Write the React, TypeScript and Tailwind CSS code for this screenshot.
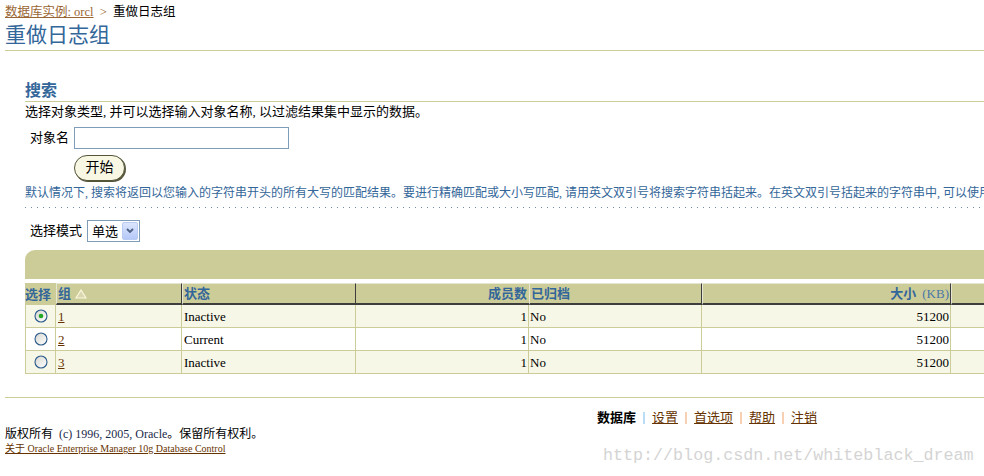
import React from "react";

const Radio = ({ checked }: { checked?: boolean }) => (
  <svg width="14" height="14" viewBox="0 0 14 14">
    <defs>
      <linearGradient id="rg" x1="0" y1="0" x2="1" y2="1">
        <stop offset="0" stopColor="#d6d6d0" />
        <stop offset="1" stopColor="#ffffff" />
      </linearGradient>
    </defs>
    <circle cx="7" cy="7" r="6" fill="url(#rg)" stroke="#2a5a8a" strokeWidth="1.1" />
    {checked && <circle cx="7" cy="7" r="2.3" fill="#22a822" />}
  </svg>
);

const SortUp = () => (
  <svg width="12" height="10" viewBox="0 0 12 10" className="ml-[4px]">
    <polygon points="6,1 11,9 1,9" fill="#d8d8b0" stroke="#fbf7dc" strokeWidth="1.2" />
  </svg>
);

const rows = [
  { g: "1", s: "Inactive", checked: true },
  { g: "2", s: "Current", checked: false },
  { g: "3", s: "Inactive", checked: false },
];

const bevel =
  "border-t border-t-[#e6e6d4] border-l border-l-[#e6e6d4] border-r border-r-[#3d3d3d] border-b-2 border-b-[#3d3d3d]";

export default function App() {
  return (
    <div className="relative w-[984px] h-[476px] overflow-hidden bg-white text-black font-['Liberation_Serif','Noto_Sans_CJK_SC',serif]">
      {/* breadcrumb */}
      <div className="h-[21px] pt-[4px] pl-[5px] text-[12.5px] leading-[16px] whitespace-nowrap">
        <span className="text-[#996633] underline">数据库实例: orcl</span>
        <span className="text-[#996633]">&nbsp; &gt; &nbsp;</span>
        <span>重做日志组</span>
      </div>
      {/* title */}
      <div className="ml-[5px] h-[30px] border-b border-[#cccc99] text-[21px] leading-[28px] text-[#336699]">
        重做日志组
      </div>

      {/* search */}
      <div className="ml-[25px] mt-[29px] h-[22px] border-b border-[#cccc99] text-[16px] leading-[21px] font-bold text-[#336699]">
        搜索
      </div>
      <div className="ml-[25px] mt-[2px] text-[13px] leading-[16px] whitespace-nowrap">
        选择对象类型, 并可以选择输入对象名称, 以过滤结果集中显示的数据。
      </div>
      <div className="mt-[7px] pl-[30px] flex items-center gap-[5px] h-[22px]">
        <span className="text-[13px] leading-[16px]">对象名</span>
        <div className="w-[215px] h-[22px] border border-[#7f9db9] bg-white" />
      </div>
      <div className="mt-[6px] ml-[74px] w-[51px] h-[26px] rounded-full border border-[#55553a] shadow-[1px_1px_0_#55553a] bg-[#f7f7e4] flex items-center justify-center text-[14px] leading-none">
        开始
      </div>
      <div className="mt-[4px] ml-[25px] text-[12px] leading-[16px] text-[#336699] whitespace-nowrap">
        默认情况下, 搜索将返回以您输入的字符串开头的所有大写的匹配结果。要进行精确匹配或大小写匹配, 请用英文双引号将搜索字符串括起来。在英文双引号括起来的字符串中, 可以使用通配符 (%)。
      </div>
      <div className="mt-[6px] ml-[25px] h-px bg-[linear-gradient(to_right,#7088a8_1px,transparent_1px)] bg-[length:6px_1px]" />

      {/* select mode */}
      <div className="mt-[12px] pl-[30px] flex items-center gap-[5px] h-[22px]">
        <span className="text-[13px] leading-[16px]">选择模式</span>
        <div className="w-[53px] h-[22px] border border-[#7f9db9] bg-white flex items-center pl-[4px] pr-[1px] justify-between">
          <span className="text-[13px] leading-none">单选</span>
          <div className="w-[16px] h-[18px] rounded-[2px] border border-[#b8cbf2] bg-[linear-gradient(#dbe5fd,#b5c8f7)] flex items-center justify-center">
            <svg width="8" height="6" viewBox="0 0 8 6">
              <polyline points="1,1 4,4 7,1" fill="none" stroke="#4d6185" strokeWidth="1.8" />
            </svg>
          </div>
        </div>
      </div>

      {/* table band */}
      <div className="mt-[8px] ml-[25px] h-[29px] bg-[#cccc99] rounded-tl-[10px]" />

      {/* table */}
      <div className="mt-[4px] ml-[25px] grid grid-cols-[31px_126px_174px_173px_173px_249px_60px] text-[13px]">
        {/* header */}
        <div className="h-[22px] bg-[#cccc99] flex items-center font-bold text-[#336699] leading-none">选择</div>
        <div className={`h-[22px] bg-[#cccc99] ${bevel} flex items-center pl-[1px] font-bold text-[#336699] leading-none`}>
          组<SortUp />
        </div>
        <div className={`h-[22px] bg-[#cccc99] ${bevel} flex items-center pl-[1px] font-bold text-[#336699] leading-none`}>
          状态
        </div>
        <div className="h-[22px] bg-[#cccc99] border-t border-t-[#e6e6d4] border-b-2 border-b-[#3d3d3d] flex items-center justify-end pr-[2px] font-bold text-[#336699] leading-none">
          成员数
        </div>
        <div className={`h-[22px] bg-[#cccc99] ${bevel} flex items-center pl-[1px] font-bold text-[#336699] leading-none`}>
          已归档
        </div>
        <div className={`h-[22px] bg-[#cccc99] ${bevel} flex items-center justify-end pr-[1px] text-[#336699] leading-none`}>
          <span className="font-bold">大小</span>
          <span className="ml-[6px] text-[#4a76a8]">(KB)</span>
        </div>
        <div className={`h-[22px] bg-[#cccc99] ${bevel}`} />

        {/* rows */}
        {rows.map((r, i) => {
          const bg = i % 2 === 0 ? "bg-[#f7f7e7]" : "bg-white";
          const cell = `h-[23px] ${bg} border-b border-r border-[#cccc99] flex items-center leading-none`;
          return (
            <React.Fragment key={r.g}>
              <div className={`${cell} border-l justify-center`}>
                <Radio checked={r.checked} />
              </div>
              <div className={`${cell} pl-[2px]`}>
                <span className="text-[#663300] underline">{r.g}</span>
              </div>
              <div className={`${cell} pl-[2px]`}>{r.s}</div>
              <div className={`${cell} justify-end pr-[1px]`}>1</div>
              <div className={`${cell} pl-[1px]`}>No</div>
              <div className={`${cell} justify-end pr-[1px]`}>51200</div>
              <div className={`${cell}`} />
            </React.Fragment>
          );
        })}
      </div>

      {/* footer */}
      <div className="mt-[23px] ml-[5px] border-t border-[#cccc99]" />
      <div className="mt-[12px] ml-[597px] flex items-center gap-[7px] h-[16px] text-[13px] leading-[16px] whitespace-nowrap">
        <span className="font-bold">数据库</span>
        <span className="w-[2px] h-[12px] bg-[#b9def5]" />
        <span className="text-[#663300] underline">设置</span>
        <span className="w-[2px] h-[12px] bg-[#f7cfb2]" />
        <span className="text-[#663300] underline">首选项</span>
        <span className="w-[2px] h-[12px] bg-[#f7cfb2]" />
        <span className="text-[#663300] underline">帮助</span>
        <span className="w-[2px] h-[12px] bg-[#f7cfb2]" />
        <span className="text-[#663300] underline">注销</span>
      </div>
      <div className="ml-[5px] text-[12px] leading-[16px] whitespace-nowrap">
        版权所有 <span className="ml-[3px] text-[#1a2a4a]">(c) 1996, 2005, Oracle</span>。保留所有权利。
      </div>
      <div className="mt-[1px] ml-[5px] text-[10px] leading-[12px] text-[#663300] underline whitespace-nowrap">
        关于 Oracle Enterprise Manager 10g Database Control
      </div>

      {/* watermark */}
      <div className="absolute left-[603px] top-[445px] text-[16.7px] leading-[22px] text-[#d4d4d4] font-['Liberation_Mono',monospace] whitespace-nowrap">
        http://blog.csdn.net/whiteblack_dream
      </div>
    </div>
  );
}
